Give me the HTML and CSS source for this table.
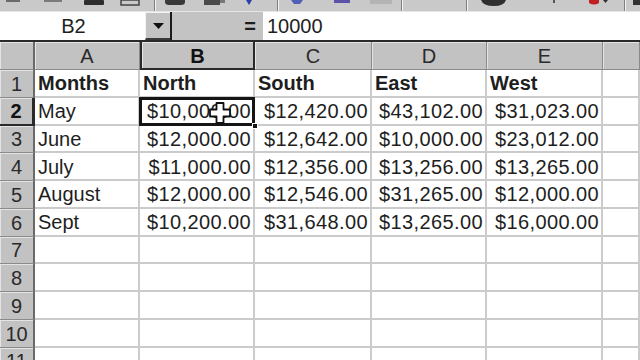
FILE: index.html
```html
<!DOCTYPE html>
<html>
<head>
<meta charset="utf-8">
<link rel="stylesheet" href="styles.css">
</head>
<body>
<div class="app">
  <div class="toolbar">
    <svg class="toolbar-strip" width="640" height="11" viewBox="0 0 640 11">
      <rect x="6" y="0" width="14" height="2" fill="#6a6a6a"/>
      <rect x="44" y="0" width="18" height="2" fill="#7a7a7a"/>
      <rect x="84" y="0" width="20" height="5" rx="1" fill="#2e2e2e"/>
      <rect x="121" y="0" width="18" height="5" fill="none" stroke="#444" stroke-width="1.5"/>
      <rect x="154" y="0" width="1" height="11" fill="#7e7e7e"/><rect x="155" y="0" width="1" height="11" fill="#f2f2f2"/>
      <path d="M165 0 h20 v2 q0 3 -4 3 h-12 q-4 0 -4 -3z" fill="#3a3a3a"/>
      <path d="M204 0 h16 v5 h-16z" fill="#4a4a4a"/><rect x="220" y="0" width="5" height="3" fill="#777"/>
      <path d="M246 0 h6 l-3 5z" fill="#2d3fa8"/>
      <rect x="277" y="0" width="1" height="11" fill="#7e7e7e"/><rect x="278" y="0" width="1" height="11" fill="#f2f2f2"/>
      <path d="M291 0 h12 l-3 4 h-6z" fill="#5060b8"/>
      <rect x="334" y="0" width="16" height="3" fill="#5a52a8"/>
      <rect x="370" y="0" width="22" height="4" fill="#b4b4b4"/>
      <rect x="401" y="0" width="1" height="11" fill="#7e7e7e"/><rect x="402" y="0" width="1" height="11" fill="#f2f2f2"/>
      <rect x="466" y="0" width="1" height="11" fill="#7e7e7e"/><rect x="467" y="0" width="1" height="11" fill="#f2f2f2"/>
      <path d="M481 0 h25 q-2 6 -12 6 q-11 0 -13 -6z" fill="#2f2f2f"/>
      <rect x="553" y="0" width="2" height="3" fill="#555"/>
      <path d="M589 0 h10 v3 q-5 3 -10 0z" fill="#c02020"/>
      <path d="M603 0 h5 l-2.5 3z" fill="#333"/>
      <rect x="624" y="0" width="1" height="11" fill="#7e7e7e"/><rect x="625" y="0" width="1" height="11" fill="#f2f2f2"/>
      <rect x="633" y="0" width="7" height="5" fill="#333"/>
    </svg>
  </div>

  <div class="formula-bar">
    <div class="name-box">B2</div>
    <div class="dropdown">
      <svg width="11" height="6" viewBox="0 0 11 6"><path d="M0 0 H11 L5.5 6Z" fill="#111"/></svg>
    </div>
    <div class="eq-area"><span class="eq">=</span></div>
    <div class="formula-input">10000</div>
  </div>

  <div class="sheet">
    <div class="hdr corner"></div>
    <div class="hdr col">A</div>
    <div class="hdr col sel">B</div>
    <div class="hdr col">C</div>
    <div class="hdr col">D</div>
    <div class="hdr col">E</div>
    <div class="hdr col"></div>

    <div class="hdr row">1</div>
    <div class="cell bold">Months</div>
    <div class="cell bold">North</div>
    <div class="cell bold">South</div>
    <div class="cell bold">East</div>
    <div class="cell bold">West</div>
    <div class="cell"></div>

    <div class="hdr row sel">2</div>
    <div class="cell">May</div>
    <div class="cell num active">$10,000.00
      <span class="fill-handle"></span>
      <svg class="cursor" width="22" height="22" viewBox="0 0 22 22"><path d="M7.5 1 H14.5 V7.5 H21 V14.5 H14.5 V21 H7.5 V14.5 H1 V7.5 H7.5 Z" fill="#fff" stroke="#111" stroke-width="1.8" stroke-linejoin="round"/></svg>
    </div>
    <div class="cell num">$12,420.00</div>
    <div class="cell num">$43,102.00</div>
    <div class="cell num">$31,023.00</div>
    <div class="cell"></div>

    <div class="hdr row">3</div>
    <div class="cell">June</div>
    <div class="cell num">$12,000.00</div>
    <div class="cell num">$12,642.00</div>
    <div class="cell num">$10,000.00</div>
    <div class="cell num">$23,012.00</div>
    <div class="cell"></div>

    <div class="hdr row">4</div>
    <div class="cell">July</div>
    <div class="cell num">$11,000.00</div>
    <div class="cell num">$12,356.00</div>
    <div class="cell num">$13,256.00</div>
    <div class="cell num">$13,265.00</div>
    <div class="cell"></div>

    <div class="hdr row">5</div>
    <div class="cell">August</div>
    <div class="cell num">$12,000.00</div>
    <div class="cell num">$12,546.00</div>
    <div class="cell num">$31,265.00</div>
    <div class="cell num">$12,000.00</div>
    <div class="cell"></div>

    <div class="hdr row">6</div>
    <div class="cell">Sept</div>
    <div class="cell num">$10,200.00</div>
    <div class="cell num">$31,648.00</div>
    <div class="cell num">$13,265.00</div>
    <div class="cell num">$16,000.00</div>
    <div class="cell"></div>

    <div class="hdr row">7</div>
    <div class="cell"></div><div class="cell"></div><div class="cell"></div><div class="cell"></div><div class="cell"></div><div class="cell"></div>
    <div class="hdr row">8</div>
    <div class="cell"></div><div class="cell"></div><div class="cell"></div><div class="cell"></div><div class="cell"></div><div class="cell"></div>
    <div class="hdr row">9</div>
    <div class="cell"></div><div class="cell"></div><div class="cell"></div><div class="cell"></div><div class="cell"></div><div class="cell"></div>
    <div class="hdr row">10</div>
    <div class="cell"></div><div class="cell"></div><div class="cell"></div><div class="cell"></div><div class="cell"></div><div class="cell"></div>
    <div class="hdr row">11</div>
    <div class="cell"></div><div class="cell"></div><div class="cell"></div><div class="cell"></div><div class="cell"></div><div class="cell"></div>
  </div>
</div>
</body>
</html>
```

FILE: styles.css
```css
* { box-sizing: border-box; }

html, body {
  margin: 0;
  padding: 0;
  width: 640px;
  height: 360px;
  overflow: hidden;
  background: #ffffff;
}

.app {
  width: 640px;
  height: 360px;
  overflow: hidden;
  font-family: "Liberation Sans", Arial, sans-serif;
  color: #1e1e1e;
}

.toolbar {
  height: 12px;
  background: #c9c9c9;
  border-bottom: 1px solid #e6e6e6;
}

.toolbar-strip { display: block; }

.formula-bar {
  display: flex;
  height: 30px;
  background: #c6c6c6;
  border-bottom: 2px solid #2a2a2a;
  font-size: 20px;
}

.name-box {
  width: 145px;
  background: #ffffff;
  display: flex;
  align-items: center;
  justify-content: center;
  padding-left: 2px;
}

.dropdown {
  width: 25px;
  background: #c3c3c3;
  border-top: 1px solid #f4f4f4;
  border-left: 1px solid #f4f4f4;
  border-bottom: 2px solid #3a3a3a;
  display: flex;
  align-items: center;
  justify-content: center;
}

.eq-area {
  width: 93px;
  background: #c3c3c3;
  border-left: 2px solid #1a1a1a;
  display: flex;
  align-items: center;
  justify-content: flex-end;
  padding-right: 7px;
}

.eq {
  font-weight: bold;
  font-size: 20px;
}

.formula-input {
  flex: 1;
  background: #ffffff;
  display: flex;
  align-items: center;
  padding-left: 4px;
}

.sheet {
  display: grid;
  grid-template-columns: 35px 105px 115px 117px 115px 116px 1fr;
  grid-template-rows: 28px repeat(11, 27.75px);
  font-size: 20px;
}

.hdr {
  background: #c2c2c2;
  display: flex;
  align-items: center;
  justify-content: center;
  border-right: 1px solid #8a8a8a;
  border-bottom: 1px solid #8a8a8a;
  box-shadow: inset 1px 1px 0 #e4e4e4;
  color: #2a2a2a;
  padding-top: 2px;
}

.hdr.corner { border-right: 2px solid #6a6a6a; }

.hdr.row {
  border-right: 2px solid #6a6a6a;
  justify-content: center;
}

.hdr.sel {
  font-weight: bold;
  color: #111;
}

.hdr.col.sel {
  border-left: 2px solid #2a2a2a;
  border-right: 2px solid #2a2a2a;
  border-bottom: 2px solid #2a2a2a;
}

.hdr.row.sel {
  border-bottom: 2px solid #2a2a2a;
  border-right: 3px solid #2a2a2a;
}

.cell {
  position: relative;
  display: flex;
  align-items: center;
  padding: 2px 3px 0 3px;
  border-right: 2px solid #cbcbcb;
  border-bottom: 2px solid #cbcbcb;
  white-space: nowrap;
  background: #ffffff;
}

.cell.bold { font-weight: bold; padding-left: 3px; }

.cell.num {
  justify-content: flex-end;
  letter-spacing: 0.4px;
  padding-right: 2px;
}

.cell.active::after {
  content: "";
  position: absolute;
  left: -1px;
  top: -1px;
  right: -2px;
  bottom: -2px;
  border: 3px solid #151515;
  pointer-events: none;
}

.fill-handle {
  position: absolute;
  right: -5px;
  bottom: -5px;
  width: 6px;
  height: 6px;
  background: #151515;
  border: 1px solid #ffffff;
  z-index: 2;
}

.cursor {
  position: absolute;
  left: 69px;
  top: 4px;
  z-index: 3;
}
```
